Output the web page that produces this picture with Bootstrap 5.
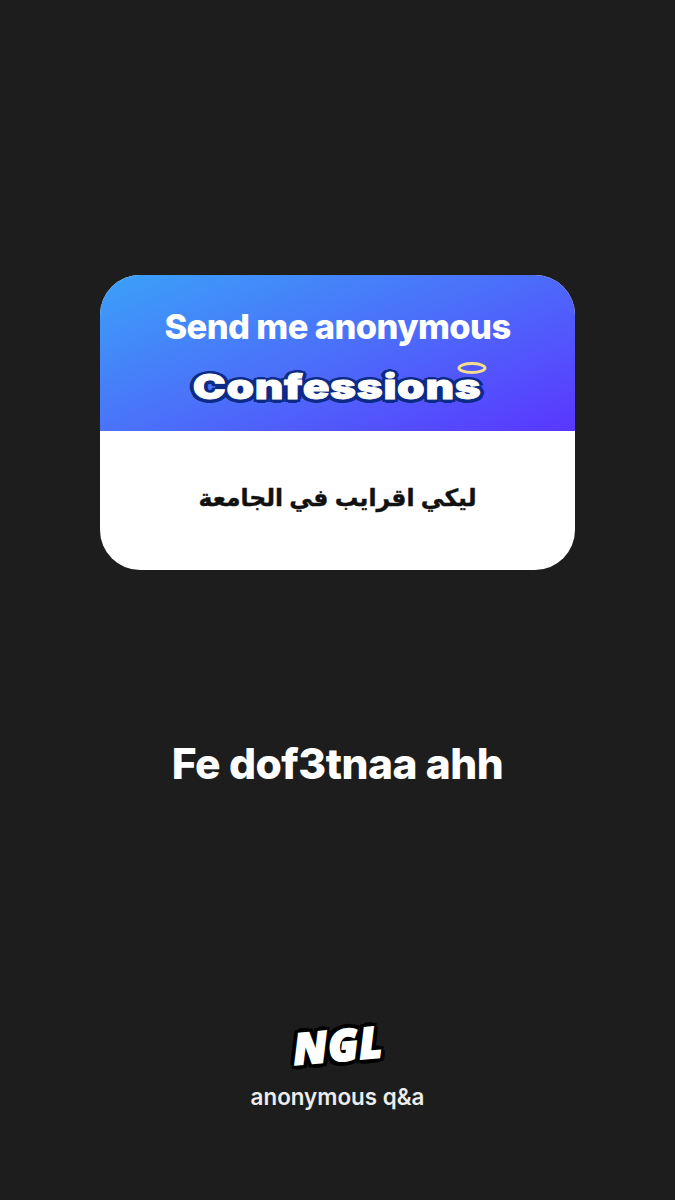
<!DOCTYPE html>
<html lang="en">
<head>
  <meta charset="UTF-8" />
  <meta name="viewport" content="width=device-width, initial-scale=1" />
  <title>NGL</title>
  <link href="https://cdn.jsdelivr.net/npm/bootstrap@5.3.3/dist/css/bootstrap.min.css" rel="stylesheet" />
  <style>
    body { background: #1d1d1d; height: 1200px; font-family: Inter, "Liberation Sans", sans-serif; }
    .story { padding-top: 275px; height: 1200px; }
    .q-card { width: 475px; height: 295px; border-radius: 40px; overflow: hidden; background: #fff; }
    .q-head { height: 156px; padding-top: 33px; background: linear-gradient(158deg, #3ba1f8 0%, #4c6cfa 52%, #5a36ff 100%); }
    .q-title { font-size: 34.5px; font-weight: 800; line-height: 38px; letter-spacing: -0.6px; color: #fff; }
    .q-brand { position: relative; margin-top: 21px; height: 40px; }
    .q-word { display: inline-block; font-size: 34px; font-weight: 900; line-height: 40px; letter-spacing: 0.5px; color: #fff;
      -webkit-text-stroke: 0.8px #fff; transform: scaleX(1.3);
      text-shadow: 3.5px 0 0 #0c2a86, -3.5px 0 0 #0c2a86, 0 3.5px 0 #0c2a86, 0 -3.5px 0 #0c2a86, 2.5px 2.5px 0 #0c2a86, -2.5px 2.5px 0 #0c2a86, 2.5px -2.5px 0 #0c2a86, -2.5px -2.5px 0 #0c2a86; }
    .halo { position: absolute; left: 356px; top: -7px; }
    .q-body { height: 139px; padding-bottom: 6px; }
    .q-ar { font-family: "DejaVu Sans", sans-serif; font-size: 23.5px; font-weight: 700; color: #111; line-height: 34px; word-spacing: -2px; -webkit-text-stroke: 0.4px #111; }
    .answer { margin-top: 170px; font-size: 42.5px; font-weight: 800; line-height: 48px; letter-spacing: -0.5px; color: #fff; }
    .ngl-mark { margin-top: 233px; height: 48px; }
    .ngl-word { display: inline-block; font-family: "Open Sans", sans-serif; font-style: italic; font-weight: 800; font-size: 43px; line-height: 48px; letter-spacing: 1px; color: #fff;
      -webkit-text-stroke: 2px #fff; transform: rotate(-5deg);
      text-shadow: 5px 0 0 #000, -5px 0 0 #000, 0 5px 0 #000, 0 -5px 0 #000, 4px 4px 0 #000, -4px 4px 0 #000, 4px -4px 0 #000, -4px -4px 0 #000; }
    .ngl-sub { margin-top: 14px; font-size: 22.4px; font-weight: 600; line-height: 28px; color: #ececec; }
  </style>
</head>
<body>
  <div class="story d-flex flex-column align-items-center text-center">
    <div class="q-card">
      <div class="q-head">
        <div class="q-title">Send me anonymous</div>
        <div class="q-brand">
          <span class="q-word">Confessions</span>
          <svg class="halo" width="32" height="16" viewBox="0 0 32 16"><ellipse cx="16" cy="8" rx="13" ry="4.5" fill="none" stroke="#f2dc8e" stroke-width="3"/></svg>
        </div>
      </div>
      <div class="q-body d-flex align-items-center justify-content-center">
        <div class="q-ar" dir="rtl" lang="ar">ليكي اقرايب في الجامعة</div>
      </div>
    </div>
    <div class="answer">Fe dof3tnaa ahh</div>
    <div class="ngl-mark"><span class="ngl-word">NGL</span></div>
    <div class="ngl-sub">anonymous q&amp;a</div>
  </div>
  <script src="https://cdn.jsdelivr.net/npm/bootstrap@5.3.3/dist/js/bootstrap.bundle.min.js"></script>
</body>
</html>
